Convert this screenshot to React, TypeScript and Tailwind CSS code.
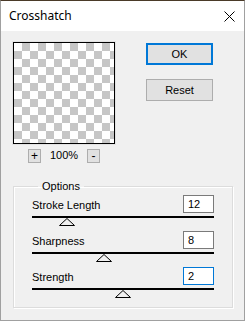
const sliders = [
  { label: 'Stroke Length', value: '12', thumb: 35, focused: false },
  { label: 'Sharpness', value: '8', thumb: 72, focused: false },
  { label: 'Strength', value: '2', thumb: 91, focused: true },
];

function Thumb({ left }: { left: number }) {
  return (
    <svg
      className="absolute top-0"
      style={{ left: left - 8 }}
      width="16"
      height="8"
      viewBox="0 0 16 8"
    >
      <path d="M8 0.5 L15.5 7.5 L0.5 7.5 Z" fill="#f0f0f0" stroke="#000" strokeWidth="1" />
    </svg>
  );
}

function SliderRow({ label, value, thumb, focused }: (typeof sliders)[number]) {
  return (
    <div className="flex flex-col">
      <div className="flex items-end justify-between">
        <span className="pb-[1px] leading-[13px]">{label}</span>
        <div
          className={
            focused
              ? 'w-[31px] h-[18px] border border-[#0078d7] bg-white pl-[4px] leading-[16px]'
              : 'w-[31px] h-[18px] border border-[#7a7a7a] bg-white pl-[4px] leading-[16px]'
          }
        >
          {value}
        </div>
      </div>
      <div className="mt-[3px] h-[2px] bg-black" />
      <div className="relative h-[8px]">
        <Thumb left={thumb} />
      </div>
    </div>
  );
}

export default function App() {
  return (
    <div className="w-[245px] h-[321px] overflow-hidden bg-[#f0f0f0] border-t border-t-[#4a3a28] border-x border-b border-[#a0a0a0] flex flex-col text-[11px] text-black font-['Liberation_Sans',Arial,sans-serif]">
      <div className="h-[30px] shrink-0 bg-white flex items-center justify-between pl-[8px] pr-[9px]">
        <span className="text-[12px] font-['Noto_Sans',sans-serif] text-black">Crosshatch</span>
        <svg width="11" height="11" viewBox="0 0 11 11">
          <path d="M0.5 0.5 L10.5 10.5 M10.5 0.5 L0.5 10.5" stroke="#000" strokeWidth="1" />
        </svg>
      </div>

      <div className="flex pt-[10px]">
        <div className="ml-[11px] flex flex-col items-center">
          <div className="border border-[#e3e3e3]">
            <div className="w-[102px] h-[102px] border border-black bg-[conic-gradient(#c6c6c6_25%,#ffffff_0_50%,#c6c6c6_0_75%,#ffffff_0)] bg-[length:16px_16px]" />
          </div>
          <div className="flex items-center mt-[4px] w-[72px] justify-between">
            <div className="w-[13px] h-[14px] border border-[#adadad] bg-[#e1e1e1] flex items-center justify-center leading-none text-[12px]">
              +
            </div>
            <span className="text-[11px] leading-[14px] -mt-[2px]">100%</span>
            <div className="w-[13px] h-[14px] border border-[#adadad] bg-[#e1e1e1] flex items-center justify-center leading-none text-[12px]">
              -
            </div>
          </div>
        </div>

        <div className="ml-[30px] mt-[2px] flex flex-col gap-[14px]">
          <div className="w-[67px] h-[22px] border-2 border-[#0078d7] bg-[#e1e1e1] flex items-center justify-center">
            OK
          </div>
          <div className="w-[67px] h-[22px] border border-[#adadad] bg-[#e1e1e1] flex items-center justify-center">
            Reset
          </div>
        </div>
      </div>

      <fieldset className="ml-[12px] mt-[17px] w-[220px] h-[128px] border border-[#dcdcdc] shadow-[inset_1px_1px_0_#fff,1px_1px_0_#fff] px-[18px] pt-[2px] flex flex-col gap-[5px]">
        <legend className="ml-[6px] px-[4px] leading-[13px]">Options</legend>
        {sliders.map((s) => (
          <SliderRow key={s.label} {...s} />
        ))}
      </fieldset>
    </div>
  );
}
